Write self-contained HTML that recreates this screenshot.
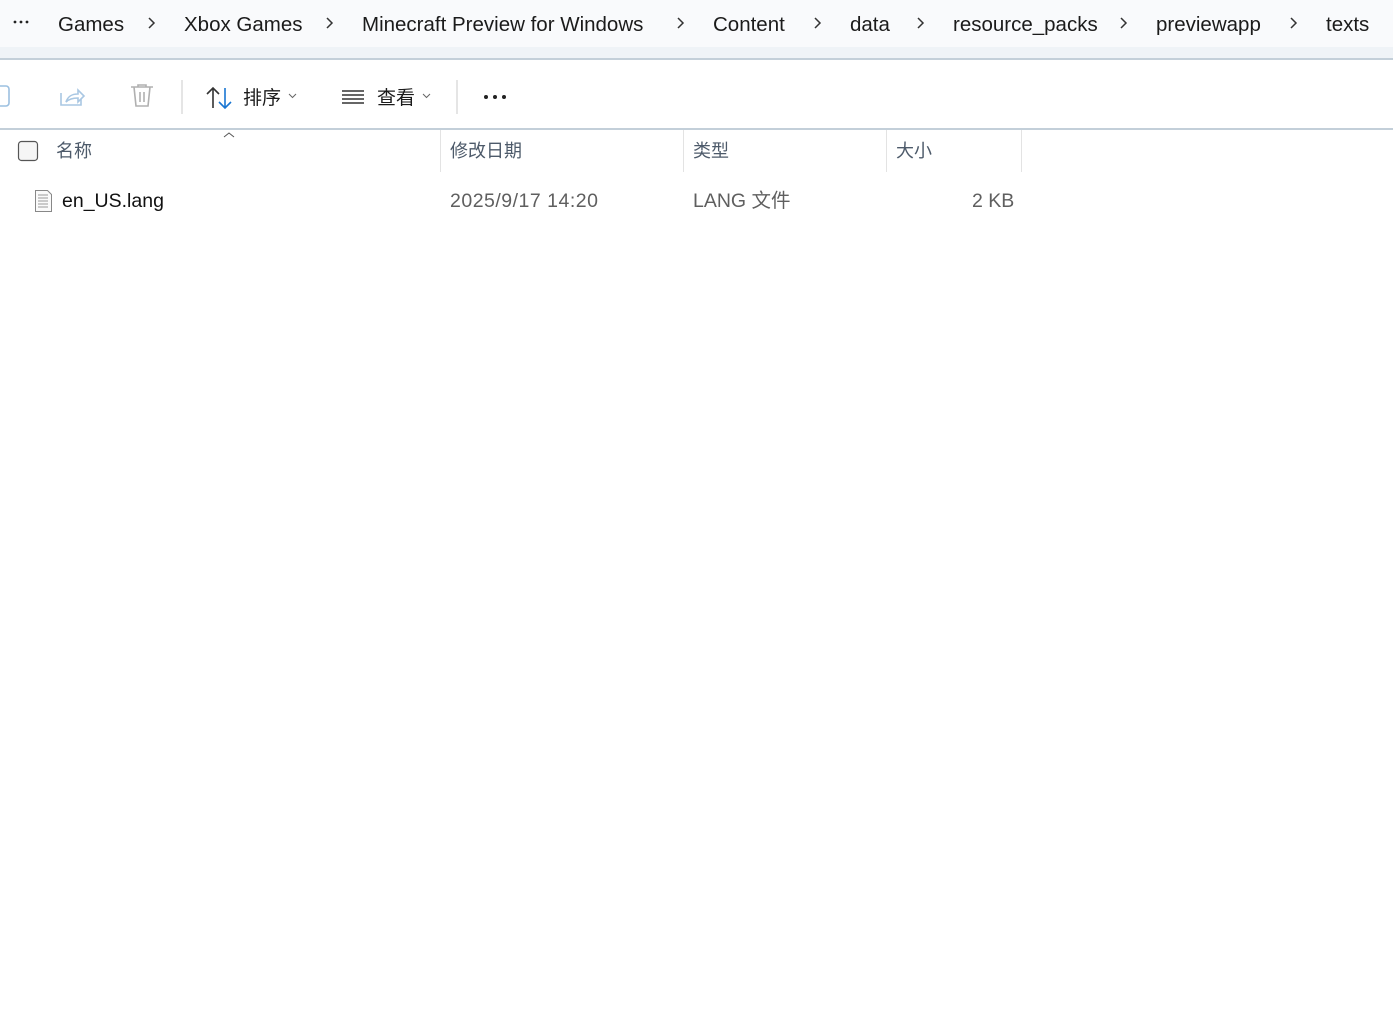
<!DOCTYPE html>
<html><head><meta charset="utf-8"><style>
body{margin:0;width:1393px;height:1034px;background:#fff;position:relative;overflow:hidden;font-family:"Segoe UI","Liberation Sans","Noto Sans CJK SC",sans-serif;}
.a{position:absolute;white-space:nowrap}
.bc{top:11px;font-size:20.5px;color:#1b1b1b;line-height:28px}
.hd{top:138px;font-size:18px;color:#4d5a6a;line-height:26px}
.rw{top:188px;font-size:19.5px;color:#5f5f5f;line-height:26px}
</style></head><body>
<div class="a" style="left:0;top:0;width:1393px;height:47px;background:#f9fafc"></div>
<div class="a" style="left:0;top:47px;width:1393px;height:12px;background:#eff3f7"></div>
<div class="a" style="left:0;top:58px;width:1393px;height:2px;background:#c3cfd9"></div>
<div class="a" style="left:0;top:128px;width:1393px;height:2px;background:#c3cfd9"></div>

<svg class="a" style="left:0;top:0" width="1393" height="47">
<circle cx="15" cy="22" r="1.4" fill="#222"/><circle cx="21" cy="22" r="1.4" fill="#222"/><circle cx="27" cy="22" r="1.4" fill="#222"/>
<g fill="none" stroke="#333" stroke-width="1.5">
<path d="M149 18l5 5-5 5"/><path d="M327 18l5 5-5 5"/><path d="M678 18l5 5-5 5"/><path d="M815 18l5 5-5 5"/><path d="M918 18l5 5-5 5"/><path d="M1121 18l5 5-5 5"/><path d="M1291 18l5 5-5 5"/>
</g></svg>
<div class="a bc" style="left:58px">Games</div>
<div class="a bc" style="left:184px">Xbox Games</div>
<div class="a bc" style="left:362px">Minecraft Preview for Windows</div>
<div class="a bc" style="left:713px">Content</div>
<div class="a bc" style="left:850px">data</div>
<div class="a bc" style="left:953px">resource_packs</div>
<div class="a bc" style="left:1156px">previewapp</div>
<div class="a bc" style="left:1326px">texts</div>

<!-- toolbar -->
<svg class="a" style="left:0;top:80px" width="520" height="34">
<path d="M0 6h6a3 3 0 0 1 3 3v14a3 3 0 0 1-3 3H0" fill="none" stroke="#9cc0e0" stroke-width="1.6"/>
<path d="M61 13v12h20v-6" fill="none" stroke="#a9c7e3" stroke-width="1.6"/>
<path d="M66 22c2-6 6-8 12-8v-4l6 6-6 6v-4c-5 0-9 1-12 4z" fill="none" stroke="#a9c7e3" stroke-width="1.6"/>
<path d="M131 7h22M138 7v-2h8v2M134 7l2 19h12l2-19M140 12v10M144 12v10" fill="none" stroke="#b0b0b0" stroke-width="1.6"/>
<rect x="181" y="-8" width="2" height="48" fill="#e5e5e5"/>
<path d="M213 28V8M207 14l6-6 6 6" fill="none" stroke="#333" stroke-width="1.6"/>
<path d="M225 8v20M219 22l6 6 6-6" fill="none" stroke="#1976d2" stroke-width="1.6"/>
<path d="M289 14l3.5 3.5 3.5-3.5" fill="none" stroke="#666" stroke-width="1"/>
<path d="M342 11h22M342 15h22M342 19h22M342 23h22" stroke="#333" stroke-width="1.5"/>
<path d="M423 14l3.5 3.5 3.5-3.5" fill="none" stroke="#666" stroke-width="1"/>
<rect x="456" y="-8" width="2" height="48" fill="#e5e5e5"/>
<circle cx="486" cy="17" r="2" fill="#222"/><circle cx="495" cy="17" r="2" fill="#222"/><circle cx="504" cy="17" r="2" fill="#222"/>
</svg>
<div class="a" style="left:243px;top:83px;font-size:19px;color:#1b1b1b">排序</div>
<div class="a" style="left:377px;top:83px;font-size:19px;color:#1b1b1b">查看</div>

<!-- header -->
<svg class="a" style="left:0;top:128px" width="1030" height="46">
<path d="M224 9l5-4 5 4" fill="none" stroke="#555" stroke-width="1"/>
<rect x="18.5" y="13.5" width="19" height="19" rx="3" fill="#f5f5f5" stroke="#555" stroke-width="1.2"/>
<rect x="440" y="2" width="1" height="42" fill="#e3e3e3"/>
<rect x="683" y="2" width="1" height="42" fill="#e3e3e3"/>
<rect x="886" y="2" width="1" height="42" fill="#e3e3e3"/>
<rect x="1021" y="2" width="1" height="42" fill="#e3e3e3"/>
</svg>
<div class="a hd" style="left:56px">名称</div>
<div class="a hd" style="left:450px">修改日期</div>
<div class="a hd" style="left:693px">类型</div>
<div class="a hd" style="left:896px">大小</div>

<svg class="a" style="left:34px;top:189px" width="20" height="24">
<path d="M1.5 1.5h12l4 4v17h-16z" fill="#fafafa" stroke="#888" stroke-width="1"/>
<path d="M4 6h10M4 9h10M4 12h10M4 15h10M4 18h10" stroke="#999" stroke-width="1"/>
</svg>
<div class="a rw" style="left:62px;color:#111">en_US.lang</div>
<div class="a rw" style="left:450px;letter-spacing:0.5px">2025/9/17 14:20</div>
<div class="a rw" style="left:693px">LANG 文件</div>
<div class="a rw" style="left:972px">2 KB</div>
</body></html>
